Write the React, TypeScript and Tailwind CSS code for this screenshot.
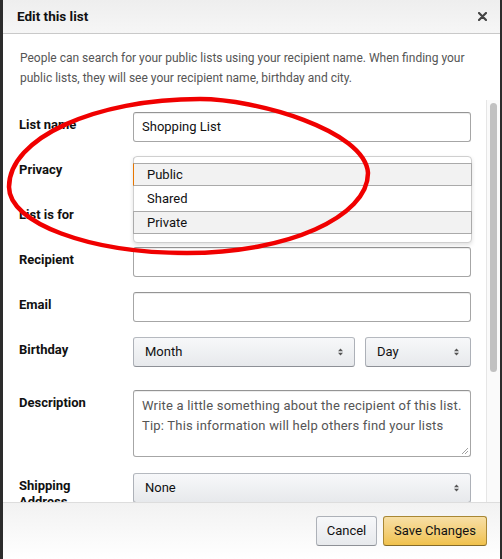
import { ReactNode } from "react";

const SelectArrows = () => (
  <svg width="5" height="8" viewBox="0 0 5 8" className="shrink-0">
    <path d="M0 3.2 L2.5 0.6 L5 3.2 Z" fill="#555" />
    <path d="M0 4.8 L2.5 7.4 L5 4.8 Z" fill="#555" />
  </svg>
);

const Row = ({
  label,
  children,
  className = "mb-[15px]",
}: {
  label: ReactNode;
  children: ReactNode;
  className?: string;
}) => (
  <div className={`flex ${className}`}>
    <div className="w-[114px] shrink-0 pt-[5px] text-[13px] font-bold leading-[16px] text-[#111]">
      {label}
    </div>
    <div className="relative w-[338px]">{children}</div>
  </div>
);

const TextInput = ({ value }: { value?: string }) => (
  <div className="flex h-[30px] items-center rounded-[3px] border border-[#a6a6a6] border-t-[#949494] bg-white px-[8px] text-[13px] text-[#111] shadow-[inset_0_1px_0_rgba(0,0,0,0.07)]">
    {value}
  </div>
);

const Dropdown = ({ value, className = "" }: { value?: string; className?: string }) => (
  <div
    className={`flex h-[30px] items-center justify-between rounded-[3px] border border-[#adb1b8] border-t-[#b5b9bf] border-b-[#8d9096] bg-linear-to-b from-[#f7f8fa] to-[#e7e9ec] pl-[11px] pr-[11px] text-[13px] text-[#111] ${className}`}
  >
    <span>{value}</span>
    <SelectArrows />
  </div>
);

const App = () => {
  return (
    <div className="relative h-[559px] w-[502px] overflow-hidden bg-[#2c2c2c] font-['Roboto',sans-serif]">
      <div className="ml-[3px] flex h-full w-[497px] flex-col bg-white">
        {/* Header */}
        <div className="flex h-[34px] shrink-0 items-center justify-between border-b border-[#c9c9c9] bg-linear-to-b from-[#eeeeee] to-[#f6f6f6] pl-[14px] pr-[13px]">
          <span className="text-[13.5px] font-bold text-[#111]">Edit this list</span>
          <svg width="9" height="9" viewBox="0 0 9 9">
            <path d="M1 1 L8 8 M8 1 L1 8" stroke="#444" strokeWidth="2.2" strokeLinecap="round" />
          </svg>
        </div>

        <p className="shrink-0 px-[17px] pt-[14px] pb-[12px] text-[12px] leading-[20px] text-[#555]">
          People can search for your public lists using your recipient name. When finding your
          public lists, they will see your recipient name, birthday and city.
        </p>

        {/* Scrolling form */}
        <div className="flex min-h-0 flex-1 overflow-hidden">
          <div className="flex-1 pl-[16px] pt-[12px]">
            <Row label="List name">
              <TextInput value="Shopping List" />
            </Row>
            <Row label="Privacy">
              <Dropdown />
              <div className="absolute -top-[1px] -right-[1px] left-0 z-10 h-[87px] rounded-[4px] border border-[#cfcfcf] bg-white pt-[6px] shadow-[0_2px_4px_rgba(0,0,0,0.13)]">
                <div className="-mx-[1px] flex h-[23px] items-center border border-[#aaa] border-l-[#e77600] bg-[#f2f2f2] pl-[13px] text-[13px] text-[#111]">
                  Public
                </div>
                <div className="flex h-[25px] items-center pl-[13px] text-[13px] text-[#111]">
                  Shared
                </div>
                <div className="-mx-[1px] flex h-[23px] items-center border border-[#aaa] bg-[#f2f2f2] pl-[13px] text-[13px] text-[#111]">
                  Private
                </div>
              </div>
            </Row>
            <Row label="List is for">
              <Dropdown />
            </Row>
            <Row label="Recipient">
              <TextInput />
            </Row>
            <Row label="Email">
              <TextInput />
            </Row>
            <Row label="Birthday" className="mb-[23px]">
              <div className="flex gap-[10px]">
                <Dropdown value="Month" className="w-[222px]" />
                <Dropdown value="Day" className="flex-1" />
              </div>
            </Row>
            <Row label="Description" className="mb-[16px]">
              <div className="relative h-[67px] rounded-[3px] border border-[#a6a6a6] border-t-[#949494] px-[8px] pt-[5px] text-[13px] leading-[20px] tracking-[0.2px] text-[#555] shadow-[inset_0_1px_0_rgba(0,0,0,0.07)]">
                Write a little something about the recipient of this list.
                <br />
                Tip: This information will help others find your lists
                <svg width="7" height="7" viewBox="0 0 7 7" className="absolute right-[2px] bottom-[2px]">
                  <path d="M1 7 L7 1 M4 7 L7 4" stroke="#888" strokeWidth="0.8" />
                </svg>
              </div>
            </Row>
            <Row
              label={
                <>
                  Shipping
                  <br />
                  Address
                </>
              }
            >
              <Dropdown value="None" />
            </Row>
          </div>

          {/* Scrollbar */}
          <div className="relative w-[14px] shrink-0 border-l border-[#e6e6e6] bg-[#fafafa]">
            <div className="absolute top-[3px] left-[3px] h-[269px] w-[7px] rounded-full bg-[#c1c1c1]" />
          </div>
        </div>

        {/* Footer */}
        <div className="flex h-[57px] shrink-0 items-center justify-end gap-[6px] border-t border-[#dddddd] bg-linear-to-b from-[#f2f2f2] to-white pr-[13px]">
          <button className="h-[30px] w-[61px] rounded-[3px] border border-[#adb1b8] border-b-[#8d9096] bg-linear-to-b from-[#f7f8fa] to-[#e7e9ec] text-[13px] text-[#111]">
            Cancel
          </button>
          <button className="h-[30px] w-[104px] rounded-[3px] border border-[#a88734] border-b-[#846a29] bg-linear-to-b from-[#f7dfa5] to-[#f0c14b] text-[13px] text-[#111]">
            Save Changes
          </button>
        </div>
      </div>

      {/* Hand-drawn annotation */}
      <svg
        width="502"
        height="559"
        viewBox="0 0 502 559"
        className="pointer-events-none absolute inset-0 z-20"
      >
        <path
          d="M200 99 C255 99 365 130 368 173 C368 217 287 253 187 253 C89 253 9 223 9 187 C9 138 95 99 200 99 Z"
          fill="none"
          stroke="#f00000"
          strokeWidth="4.5"
        />
      </svg>
    </div>
  );
};

export default App;
